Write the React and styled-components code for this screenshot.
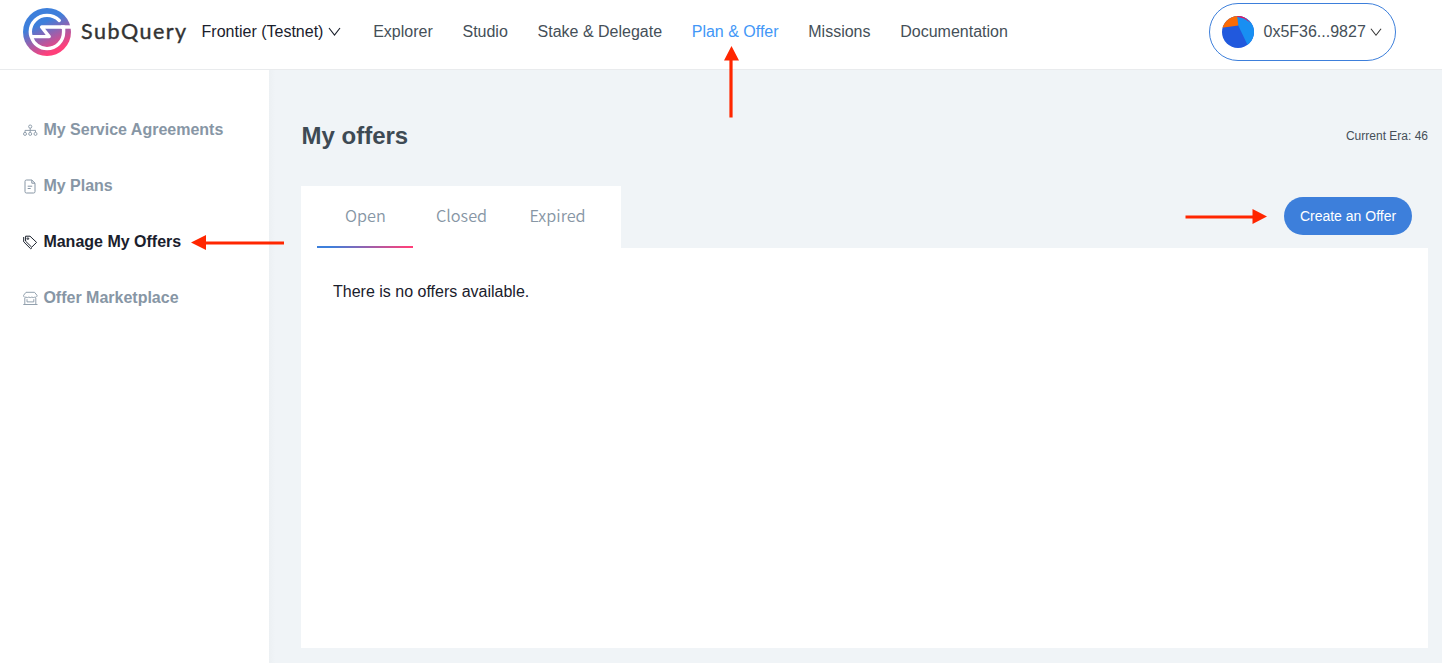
import React from "react";
import styled, { createGlobalStyle } from "styled-components";

const Global = createGlobalStyle`
  *, *::before, *::after { box-sizing: border-box; }
  body { margin: 0; font-family: "Liberation Sans", Arial, sans-serif; color: #1a202c; }
`;

const Page = styled.div`
  position: relative;
  height: 663px;
  display: flex;
  flex-direction: column;
  overflow: hidden;
  background: #fff;
`;

const Header = styled.header`
  flex: 0 0 70px;
  display: flex;
  align-items: flex-start;
  border-bottom: 1px solid #e9ebed;
  padding: 0 46px 0 23px;
`;

const Brand = styled.div`
  display: flex;
  align-items: center;
  height: 64px;
  width: 178.6px;
  gap: 10px;
`;

const Wordmark = styled.span`
  margin-top: -2px;
  font-family: Lato, sans-serif;
  font-size: 21.5px;
  line-height: 26px;
  letter-spacing: 1.5px;
  color: #333;
  -webkit-text-stroke: 0.4px #333;
`;

const Network = styled.div`
  display: flex;
  align-items: center;
  height: 63px;
  width: 171.6px;
  gap: 4.5px;
  font-size: 16px;
  white-space: nowrap;
`;

const Nav = styled.nav`
  display: flex;
  align-items: center;
  height: 63px;
  gap: 29.7px;
`;

const NavLink = styled.a`
  font-size: 16px;
  white-space: nowrap;
  color: ${(p) => (p.$active ? "#4297f7" : "#454f58")};
`;

const Account = styled.div`
  margin: 3px 0 0 auto;
  width: 187px;
  height: 58px;
  border: 1px solid #3d7fdb;
  border-radius: 29px;
  display: flex;
  align-items: center;
  padding-left: 12px;
  font-size: 16px;
  color: #454f58;
`;

const Address = styled.span`
  margin: 0 4px 0 9.5px;
`;

const Body = styled.div`
  flex: 1;
  display: flex;
  min-height: 0;
`;

const Sidebar = styled.aside`
  width: 269px;
  padding: 32px 0 0 23px;
`;

const SideItem = styled.div`
  display: flex;
  align-items: center;
  height: 56px;
  gap: 5.4px;
  font-size: 16px;
  font-weight: 700;
  color: ${(p) => (p.$active ? "#1a202c" : "#8796a5")};
`;

const SideIcon = styled.svg`
  width: 15px;
  height: 15px;
  margin-top: 1px;
  fill: none;
  stroke: currentColor;
`;

const Main = styled.main`
  flex: 1;
  background: linear-gradient(90deg, #ecf0f3 0, #f0f4f7 6px);
  padding: 0 14px 15px 32px;
  display: flex;
  flex-direction: column;
`;

const TitleRow = styled.div`
  height: 116px;
  padding-top: 16px;
  display: flex;
  align-items: center;
  justify-content: space-between;
`;

const Title = styled.h1`
  margin: 0 0 0 0.5px;
  font-size: 24px;
  line-height: 28px;
  color: #3e4a54;
`;

const Era = styled.span`
  font-size: 12px;
  color: #454f58;
`;

const TabRow = styled.div`
  height: 62px;
  display: flex;
  align-items: center;
  justify-content: space-between;
  padding-right: 16px;
`;

const Tabs = styled.div`
  width: 320px;
  height: 62px;
  padding: 0 16px;
  background: #fff;
  display: flex;
`;

const Tab = styled.div`
  width: 96px;
  height: 62px;
  display: flex;
  align-items: center;
  justify-content: center;
  padding: 0 0 3px 1px;
  border-bottom: 2px solid transparent;
  border-image: ${(p) => (p.$active ? "linear-gradient(90deg, #3d7fdb 15%, #ff3f7a 95%) 1" : "none")};
  font-family: "Noto Sans CJK SC", "Noto Sans", sans-serif;
  font-weight: 350;
  font-size: 16.3px;
  line-height: 24px;
  color: #8796a5;
`;

const CreateButton = styled.button`
  width: 128px;
  height: 38px;
  margin-top: -2px;
  padding: 0;
  border: 0;
  border-radius: 19px;
  background: #3d7fdb;
  color: #fff;
  font: 14px "Liberation Sans", Arial, sans-serif;
`;

const Panel = styled.section`
  flex: 1;
  background: #fff;
  padding: 34px 32px;
  font-size: 16px;
  line-height: 20px;
`;

const Annotations = styled.svg`
  position: absolute;
  left: 0;
  top: 0;
  pointer-events: none;
`;

const Logo = () => (
  <svg width="48" height="48" viewBox="0 0 48 48">
    <defs>
      <linearGradient id="brand" x1="0.3" y1="0.1" x2="0.7" y2="0.95">
        <stop offset="0.25" stopColor="#3d7fdb" />
        <stop offset="0.92" stopColor="#ff3f7a" />
      </linearGradient>
    </defs>
    <circle cx="24" cy="24" r="24" fill="url(#brand)" />
    <g fill="none" stroke="#fff" strokeWidth="3.4" strokeLinejoin="round" strokeLinecap="round">
      <path d="M36.3 12.4C32.8 9.1 28.5 7.4 24 7.4C14.7 7.4 7.3 14.8 7.3 23.8C7.3 25.6 7.6 27.2 8.2 28.6H26.2L18.6 19H41" />
      <path d="M8.4 29C10.6 36 16.8 40.6 24 40.6C33.3 40.6 40.6 33.3 40.6 24V19.5" />
      <path d="M38 19H50" strokeLinecap="butt" />
    </g>
  </svg>
);

const Chevron = ({ size = 13, color = "#1a202c" }) => (
  <svg width={size} height={size} viewBox="0 0 13 13" fill="none" stroke={color} strokeWidth="1.15">
    <path d="M1 3L6.5 10L12 3" />
  </svg>
);

const Avatar = () => (
  <svg width="32" height="32" viewBox="0 0 32 32">
    <clipPath id="face"><circle cx="16" cy="16" r="16" /></clipPath>
    <g clipPath="url(#face)">
      <path d="M0 0H32V32H0Z" fill="#2159dd" />
      <path d="M16 9L27 32H36V8L24 2L14 0Z" fill="#188ff2" />
      <path d="M15 -1H20L29 7L22 2.6L15 0.8Z" fill="#e5165b" />
      <path d="M-1 12L16.3 9.5L15 -1H-1Z" fill="#fb6b05" />
    </g>
  </svg>
);

const icons = {
  agreements: (
    <g strokeWidth="0.9">
      <circle cx="7.2" cy="3.6" r="1.6" />
      <path d="M7.2 5.2V9.2M2 9.2V7.4H12.5V9.2" />
      <circle cx="2" cy="10.9" r="1.5" />
      <circle cx="7.2" cy="10.9" r="1.5" />
      <circle cx="12.5" cy="10.9" r="1.5" />
    </g>
  ),
  plans: (
    <g strokeWidth="1">
      <path d="M3.5 1H8.8L12 4.2V12.6Q12 14 10.6 14H3.4Q2 14 2 12.6V2.4Q2 1 3.5 1Z" />
      <path d="M8.8 1V4.2H12M4.7 7.2H9.2M4.7 9.5H7.7" />
    </g>
  ),
  offers: (
    <g strokeWidth="1">
      <path d="M2.6 1.2H7L13.6 7.4L8.7 12.2L2.6 6.2Z" />
      <path d="M0.7 2V6.8L7.6 13.7L9 12.8" />
      <circle cx="4.9" cy="3.6" r="0.8" />
    </g>
  ),
  market: (
    <g strokeWidth="0.9">
      <path d="M3 1.3H11.5L14 4.3V5.2Q13.2 6.8 11.6 6.2Q10.4 7 8.9 6.1Q7.3 7 5.8 6.1Q4.4 7 3 6.2Q1.4 6.8.6 5.2V4.3Z" />
      <path d="M1.8 7V13.3M12.8 7V13.3M0.3 13.5H14.5M4 8.2V10.9H10.8V8.2" />
    </g>
  ),
};

const navItems = ["Explorer", "Studio", "Stake & Delegate", "Plan & Offer", "Missions", "Documentation"];
const sideItems = [
  ["agreements", "My Service Agreements"],
  ["plans", "My Plans"],
  ["offers", "Manage My Offers"],
  ["market", "Offer Marketplace"],
];

export default function App() {
  return (
    <Page>
      <Global />
      <Header>
        <Brand>
          <Logo />
          <Wordmark>SubQuery</Wordmark>
        </Brand>
        <Network>
          <span>Frontier (Testnet)</span>
          <Chevron />
        </Network>
        <Nav>
          {navItems.map((t) => (
            <NavLink key={t} $active={t === "Plan & Offer"}>{t}</NavLink>
          ))}
        </Nav>
        <Account>
          <Avatar />
          <Address>0x5F36...9827</Address>
          <Chevron size={12} color="#333" />
        </Account>
      </Header>
      <Body>
        <Sidebar>
          {sideItems.map(([icon, label]) => (
            <SideItem key={icon} $active={icon === "offers"}>
              <SideIcon viewBox="0 0 15 15">{icons[icon]}</SideIcon>
              {label}
            </SideItem>
          ))}
        </Sidebar>
        <Main>
          <TitleRow>
            <Title>My offers</Title>
            <Era>Current Era: 46</Era>
          </TitleRow>
          <TabRow>
            <Tabs>
              <Tab $active>Open</Tab>
              <Tab>Closed</Tab>
              <Tab>Expired</Tab>
            </Tabs>
            <CreateButton>Create an Offer</CreateButton>
          </TabRow>
          <Panel>There is no offers available.</Panel>
        </Main>
      </Body>
      <Annotations width="1442" height="663" fill="#ff2600" stroke="#ff2600">
        <path d="M731 117.5V58M284 243H204M1185.500 217H1255" strokeWidth="3.2" />
        <path d="M731.500 46L739 60.500H724ZM191 242.500L206 235V250ZM1267 216.500L1252.500 209V224Z" stroke="none" />
      </Annotations>
    </Page>
  );
}
